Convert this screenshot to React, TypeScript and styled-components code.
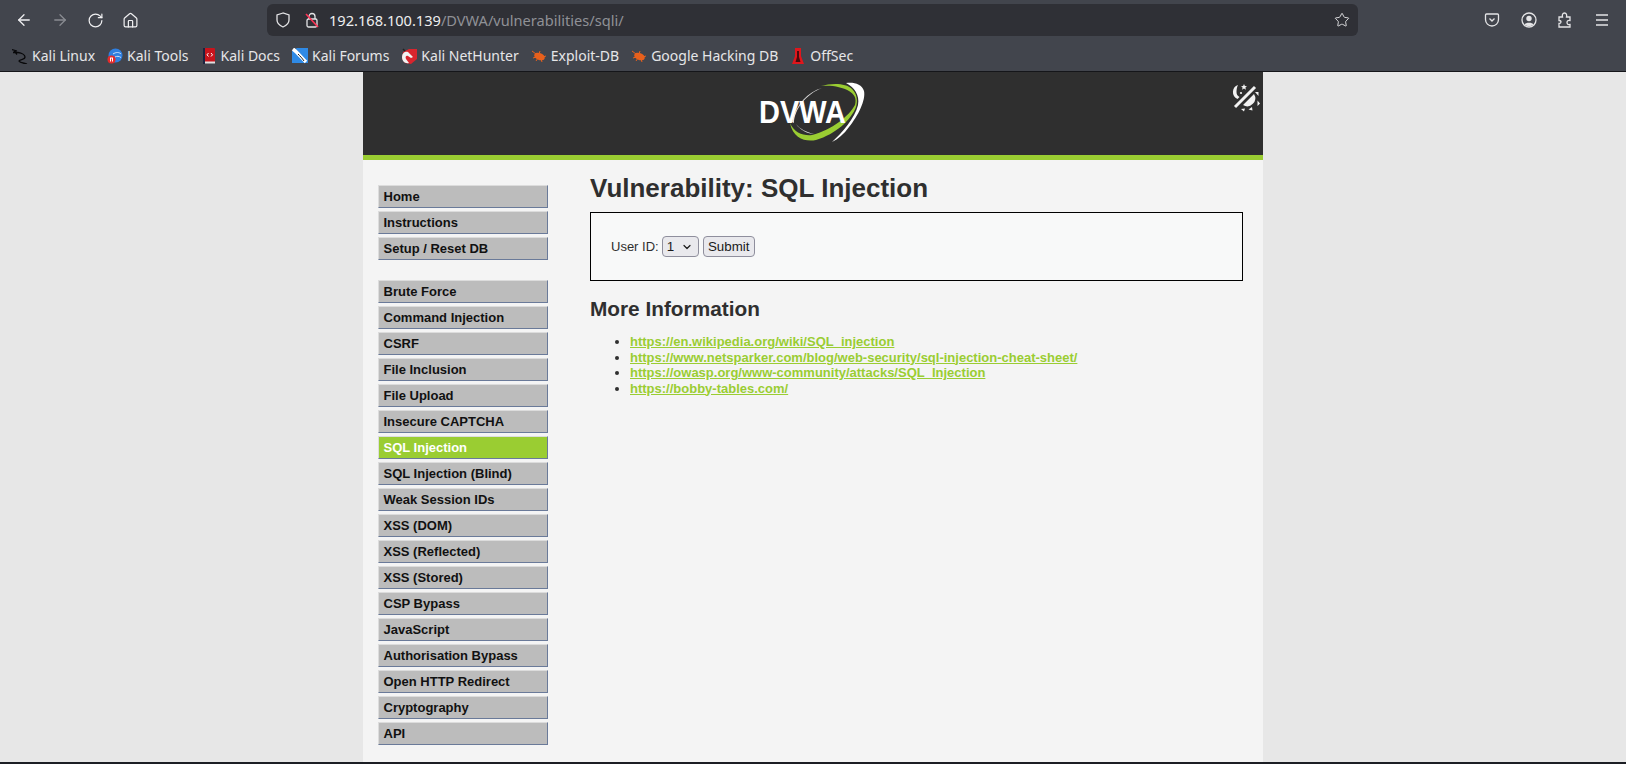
import styled, { createGlobalStyle } from "styled-components";
import { ArrowLeft, ArrowRight, RotateCw, House, Star, ChevronDown } from "lucide-react";

const GlobalStyle = createGlobalStyle`
  html, body {
    margin: 0;
    padding: 0;
    height: 100%;
    overflow: hidden;
  }
  * {
    box-sizing: border-box;
  }
`;

const bookmarks = [
  { label: "Kali Linux", kind: "dragon" },
  { label: "Kali Tools", kind: "tools" },
  { label: "Kali Docs", kind: "docs" },
  { label: "Kali Forums", kind: "forums" },
  { label: "Kali NetHunter", kind: "hunter" },
  { label: "Exploit-DB", kind: "bug" },
  { label: "Google Hacking DB", kind: "bug" },
  { label: "OffSec", kind: "offsec" },
];

const topMenu = ["Home", "Instructions", "Setup / Reset DB"];

const vulnMenu = [
  "Brute Force",
  "Command Injection",
  "CSRF",
  "File Inclusion",
  "File Upload",
  "Insecure CAPTCHA",
  "SQL Injection",
  "SQL Injection (Blind)",
  "Weak Session IDs",
  "XSS (DOM)",
  "XSS (Reflected)",
  "XSS (Stored)",
  "CSP Bypass",
  "JavaScript",
  "Authorisation Bypass",
  "Open HTTP Redirect",
  "Cryptography",
  "API",
];

const links = [
  "https://en.wikipedia.org/wiki/SQL_injection",
  "https://www.netsparker.com/blog/web-security/sql-injection-cheat-sheet/",
  "https://owasp.org/www-community/attacks/SQL_Injection",
  "https://bobby-tables.com/",
];

function BookmarkIcon({ kind }: { kind: string }) {
  if (kind === "dragon") {
    return (
      <svg width="16" height="16" viewBox="0 0 16 16" fill="none">
        <path d="M0 1.500 5 3M1 4.500h5c4 .5 7 2.500 7 4.500 0 3-5 2-6 4 1 2 5 2 8 3M2 2.500l3 4" stroke="#08080a" strokeWidth="1.300" />
      </svg>
    );
  }
  if (kind === "tools") {
    return (
      <svg width="16" height="16" viewBox="0 0 16 16">
        <circle cx="8.500" cy="7.500" r="7" fill="#2f7fe0" />
        <path d="M6 6c3-2 6-2 8 0M8 9c2-1 4-1 6 .5" stroke="#cfe3fa" strokeWidth="1" fill="none" />
        <circle cx="4.500" cy="11.500" r="4" fill="#e52b2b" />
        <path d="M3 10h3M3.500 10v3.500M5.500 10v3.500" stroke="#fff" strokeWidth="1" />
      </svg>
    );
  }
  if (kind === "docs") {
    return (
      <svg width="16" height="16" viewBox="0 0 16 16">
        <rect x="2" y="0" width="12" height="15" rx="1" fill="#c8141c" />
        <rect x="2" y="0" width="2" height="16" fill="#1c2340" />
        <rect x="4" y="13.500" width="10" height="2" fill="#e0e0e0" />
        <path d="M7.500 5 6 6.800l1.500 1.700M10 5l1.500 1.800L10 8.500" stroke="#fff" strokeWidth="1" fill="none" />
      </svg>
    );
  }
  if (kind === "forums") {
    return (
      <svg width="16" height="16" viewBox="0 0 16 16">
        <path d="M0 3 5 0h11v15H0z" fill="#2f8ae6" />
        <path d="M1 1c4 3 8 8 13 13" stroke="#fff" strokeWidth="3.500" fill="none" />
        <path d="M6 6c2 2 4 4 6 7" stroke="#222" strokeWidth="1" fill="none" />
      </svg>
    );
  }
  if (kind === "hunter") {
    return (
      <svg width="16" height="16" viewBox="0 0 16 16">
        <path d="M2 4 8 1h8v10l-6 5-6-1-3-4z" fill="#d8252e" />
        <path d="M1 9c0-4 3-6 6-5l5 5-2 1-3-2c-2-1-3 1-2 3l3 4c-4 1-7-2-7-6z" fill="#f2f2f2" />
        <path d="M4 3 2 1" stroke="#222" strokeWidth="1.500" />
      </svg>
    );
  }
  if (kind === "bug") {
    return (
      <svg width="16" height="16" viewBox="0 0 16 16">
        <ellipse cx="8.500" cy="8.500" rx="5.500" ry="3.500" transform="rotate(20 8.500 8.500)" fill="#e8601c" />
        <path d="M1 3l4 3M5 13l2-3M11 14l-1-3M2 10l3-1M15 8l-3 1M9 3l-1 3" stroke="#e8601c" strokeWidth="1" />
      </svg>
    );
  }
  return (
    <svg width="16" height="16" viewBox="0 0 16 16">
      <path d="M5 0h6v8l3 8H2l3-8z" fill="#e0161c" />
      <path d="M7 3h2v6l1.500 5h-5L7 9z" fill="#4a0a0c" />
    </svg>
  );
}

function ThemeIcon() {
  return (
    <svg width="30" height="30" viewBox="0 0 30 30" fill="#f2f2f2">
      <path d="M7 2A7.500 7.500 0 0 0 6.500 16L8.500 14A5.500 5.500 0 0 1 5.500 9C5.500 6 6 4 7 2Z" />
      <path d="m13 1 .9 2 2.100.2-1.600 1.400.5 2.100-1.900-1.100-1.900 1.100.5-2.100L10 3.200l2.100-.2z" />
      <circle cx="10" cy="10" r="1.100" />
      <path d="M4 24 24 4" stroke="#f2f2f2" strokeWidth="3" />
      <path d="M23 11A8 8 0 0 1 12 22Z" />
      <path d="M24 9h3.500v4zM26.500 17.500l2.500 3-2.500 2.500zM21 24l.5 3.500-4-1zM14 25.500l-1 3-3-2.500z" />
    </svg>
  );
}

function Logo() {
  return (
    <LogoSvg viewBox="0 0 115 65">
      <g transform="translate(-2 0)">
        <path d="M67 6C78 3 92 3 98 9c5 5 6 12 4 18C97 40 82 54 62 60 52 62 39 59 36 43c4 10 14 13 22 12 20-5 37-19 43-30 2-7-1-11-6-14C88 7 78 5 67 6Z" fill="#9acd32" />
        <path d="M92 3c8-1 16 1 18 8 2 9-6 25-15 36-5 7-11 12-17 15 10-9 23-24 26-37 2-10-4-18-12-22Z" fill="#fff" />
        <path d="M40 43C40 30 52 14 68 8 54 12 42 24 38 42ZM42 44c4 6 12 10 18 10-8-2-14-5-18-10Z" fill="#dcdcdc" />
      </g>
      <LogoText x="3" y="43" textLength="87" lengthAdjust="spacingAndGlyphs">DVWA</LogoText>
    </LogoSvg>
  );
}

export default function App() {
  return (
    <Screen>
      <GlobalStyle />
      <Chrome>
        <NavRow>
          <NavButtons>
            <NavIcon><ArrowLeft size={18} strokeWidth={1.7} /></NavIcon>
            <NavIcon $dim><ArrowRight size={18} strokeWidth={1.7} /></NavIcon>
            <NavIcon><RotateCw size={17} strokeWidth={1.7} /></NavIcon>
            <NavIcon><House size={17} strokeWidth={1.7} /></NavIcon>
          </NavButtons>
          <UrlBar>
            <svg width="16" height="16" viewBox="0 0 16 16" fill="none" stroke="#e4e4e6" strokeWidth="1.300">
              <path d="M8 1 2 3v5c0 3 2.500 5.500 6 7 3.500-1.500 6-4 6-7V3z" />
            </svg>
            <LockIcon width="16" height="16" viewBox="0 0 16 16" fill="none">
              <rect x="3" y="7" width="10" height="8" rx="1.500" stroke="#e4e4e6" strokeWidth="1.300" />
              <path d="M5 7V4.500a3 3 0 0 1 6 0V7" stroke="#e4e4e6" strokeWidth="1.300" />
              <path d="M2 2l12 13" stroke="#ff3355" strokeWidth="1.600" />
            </LockIcon>
            <UrlText>
              <UrlHost>192.168.100.139</UrlHost>/DVWA/vulnerabilities/sqli/
            </UrlText>
            <Star size={16} strokeWidth={1.4} color="#e4e4e6" />
          </UrlBar>
          <ToolIcons>
            <svg width="16" height="16" viewBox="0 0 16 16" fill="none" stroke="#e4e4e6" strokeWidth="1.300">
              <path d="M2.500 2h11c.6 0 1 .4 1 1v4.500a6.500 6.500 0 0 1 -13 0V3c0-.6.4-1 1-1z" />
              <path d="m5.500 6.500 2.500 2.500 2.500-2.500" />
            </svg>
            <svg width="16" height="16" viewBox="0 0 16 16" fill="none">
              <circle cx="8" cy="8" r="7" stroke="#e4e4e6" strokeWidth="1.300" />
              <circle cx="8" cy="6.500" r="2.700" fill="#e4e4e6" />
              <path d="M3.500 12.500c1-2.500 8-2.500 9 0-2 2-7 2-9 0z" fill="#e4e4e6" />
            </svg>
            <svg width="16" height="16" viewBox="0 0 16 16" fill="none" stroke="#e4e4e6" strokeWidth="1.300">
              <path d="M2 5h3.500C5 3 5.500 1 7.500 1s2.500 2 2 4H13v3.500c-2-.5-3 .5-3 2s1 2.500 3 2V15H2v-3.500c1.500 0 2-.5 2-1.500S3.500 8.500 2 8.500z" />
            </svg>
            <svg width="16" height="16" viewBox="0 0 16 16" fill="none" stroke="#e4e4e6" strokeWidth="1.400">
              <path d="M2 3h12M2 8h12M2 13h12" />
            </svg>
          </ToolIcons>
        </NavRow>
        <BookmarkRow>
          {bookmarks.map((b) => (
            <Bookmark key={b.label}>
              <BookmarkIcon kind={b.kind} />
              <span>{b.label}</span>
            </Bookmark>
          ))}
        </BookmarkRow>
      </Chrome>
      <Viewport>
        <Container>
          <Header>
            <Logo />
            <ThemeToggle>
              <ThemeIcon />
            </ThemeToggle>
          </Header>
          <Body>
            <Sidebar>
              <MenuGroup>
                {topMenu.map((m) => (
                  <MenuItem key={m}>{m}</MenuItem>
                ))}
              </MenuGroup>
              <MenuGroup>
                {vulnMenu.map((m) => (
                  <MenuItem key={m} $active={m === "SQL Injection"}>
                    {m}
                  </MenuItem>
                ))}
              </MenuGroup>
            </Sidebar>
            <Content>
              <Title>Vulnerability: SQL Injection</Title>
              <FormBox>
                <Label>User ID:</Label>
                <SelectWrap>
                  <Select defaultValue="1">
                    <option value="1">1</option>
                    <option value="2">2</option>
                  </Select>
                  <Chevron>
                    <ChevronDown size={12} strokeWidth={2.4} />
                  </Chevron>
                </SelectWrap>
                <Submit type="button">Submit</Submit>
              </FormBox>
              <Subtitle>More Information</Subtitle>
              <LinkList>
                {links.map((l) => (
                  <li key={l}>
                    <ExtLink href="#">{l}</ExtLink>
                  </li>
                ))}
              </LinkList>
            </Content>
          </Body>
        </Container>
      </Viewport>
    </Screen>
  );
}

const Screen = styled.div`
  display: flex;
  flex-direction: column;
  height: 764px;
  overflow: hidden;
  background: #1c1e24;
  padding-bottom: 2px;
`;

const Chrome = styled.div`
  flex: none;
  height: 72px;
  background: #42454d;
  border-bottom: 1px solid #15161a;
  color: #e8e8ea;
  font-family: "Noto Sans", sans-serif;
`;

const NavRow = styled.div`
  display: flex;
  align-items: center;
  height: 40px;
`;

const NavButtons = styled.div`
  display: flex;
  align-items: center;
  width: 267px;
  padding-left: 15px;
  gap: 18px;
`;

const NavIcon = styled.span<{ $dim?: boolean }>`
  display: flex;
  color: ${(p) => (p.$dim ? "#8a8c92" : "#f0f0f2")};
`;

const UrlBar = styled.div`
  display: flex;
  align-items: center;
  width: 1091px;
  height: 32px;
  padding: 0 8px 0 8px;
  background: #2f3036;
  border-radius: 6px;
`;

const LockIcon = styled.svg`
  margin-left: 13px;
`;

const UrlText = styled.div`
  flex: 1;
  margin-left: 9px;
  font-size: 14.600px;
  color: #8f9196;
`;

const UrlHost = styled.span`
  color: #eeeeef;
`;

const ToolIcons = styled.div`
  display: flex;
  align-items: center;
  gap: 20.500px;
  margin-left: 126px;
`;

const BookmarkRow = styled.div`
  display: flex;
  align-items: center;
  height: 31px;
  padding-left: 12px;
  gap: 12px;
`;

const Bookmark = styled.div`
  display: flex;
  align-items: center;
  gap: 4px;
  font-size: 14px;
  color: #e6e6e8;
  white-space: nowrap;
`;

const Viewport = styled.div`
  flex: 1;
  min-height: 0;
  display: flex;
  justify-content: center;
  background: #e7e7e7;
  overflow: hidden;
`;

const Container = styled.div`
  width: 900px;
  background: #f4f4f4;
  font-family: "Liberation Sans", Arial, sans-serif;
`;

const Header = styled.header`
  position: relative;
  display: flex;
  justify-content: center;
  height: 88px;
  padding-top: 8px;
  background: #2f2f2f;
  border-bottom: 5px solid #9acd32;
`;

const LogoSvg = styled.svg`
  width: 115px;
  height: 65px;
`;

const LogoText = styled.text`
  font-family: "Liberation Sans", Arial, sans-serif;
  font-size: 32px;
  font-weight: 700;
  fill: #fff;
`;

const ThemeToggle = styled.div`
  position: absolute;
  top: 11px;
  right: 2px;
  display: flex;
`;

const Body = styled.div`
  display: flex;
  padding: 25px 20px 0 15px;
`;

const Sidebar = styled.nav`
  flex: none;
  display: flex;
  flex-direction: column;
  gap: 20px;
  width: 170px;
`;

const MenuGroup = styled.div`
  display: flex;
  flex-direction: column;
  gap: 3px;
`;

const MenuItem = styled.div<{ $active?: boolean }>`
  height: 23px;
  padding-left: 4.500px;
  line-height: 21px;
  font-size: 13px;
  font-weight: 700;
  color: ${(p) => (p.$active ? "#fff" : "#111")};
  background: ${(p) => (p.$active ? "#9acd32" : "#bcbcbc")};
  border-top: 1px solid #dcdcdc;
  border-left: 1px solid #dcdcdc;
  border-right: 1px solid #6a7a99;
  border-bottom: 1px solid #6a7a99;
`;

const Content = styled.main`
  flex: 1;
  margin-left: 42px;
  color: #2f2f2f;
`;

const Title = styled.h1`
  margin: -25px 0 0;
  height: 52px;
  font-size: 26px;
  font-weight: 700;
  line-height: 56px;
`;

const FormBox = styled.div`
  display: flex;
  align-items: center;
  gap: 4px;
  height: 69px;
  padding-left: 20px;
  background: #f8f9f9;
  border: 1px solid #000;
`;

const Label = styled.span`
  margin-right: -1px;
  font-size: 13px;
`;

const SelectWrap = styled.span`
  position: relative;
  display: flex;
`;

const Select = styled.select`
  appearance: none;
  width: 37px;
  height: 21px;
  padding: 0 0 0 4px;
  color: #1a1a1a;
  font-family: "Liberation Sans", Arial, sans-serif;
  font-size: 13.333px;
  background: #e9e9ed;
  border: 1px solid #8f8f9d;
  border-radius: 4px;
`;

const Chevron = styled.span`
  position: absolute;
  top: 5px;
  right: 6px;
  display: flex;
  color: #1a1a1a;
  pointer-events: none;
`;

const Submit = styled.button`
  width: 52px;
  height: 21px;
  padding: 0;
  color: #1a1a1a;
  font-family: "Liberation Sans", Arial, sans-serif;
  font-size: 13.333px;
  background: #e9e9ed;
  border: 1px solid #8f8f9d;
  border-radius: 4px;
`;

const Subtitle = styled.h2`
  margin: 16px 0 0;
  font-size: 20.800px;
  font-weight: 700;
  line-height: 24px;
`;

const LinkList = styled.ul`
  margin: 13px 0 0;
  padding-left: 40px;
  font-size: 13px;
  line-height: 15.500px;
`;

const ExtLink = styled.a`
  color: #9acd32;
  font-weight: 700;
`;
